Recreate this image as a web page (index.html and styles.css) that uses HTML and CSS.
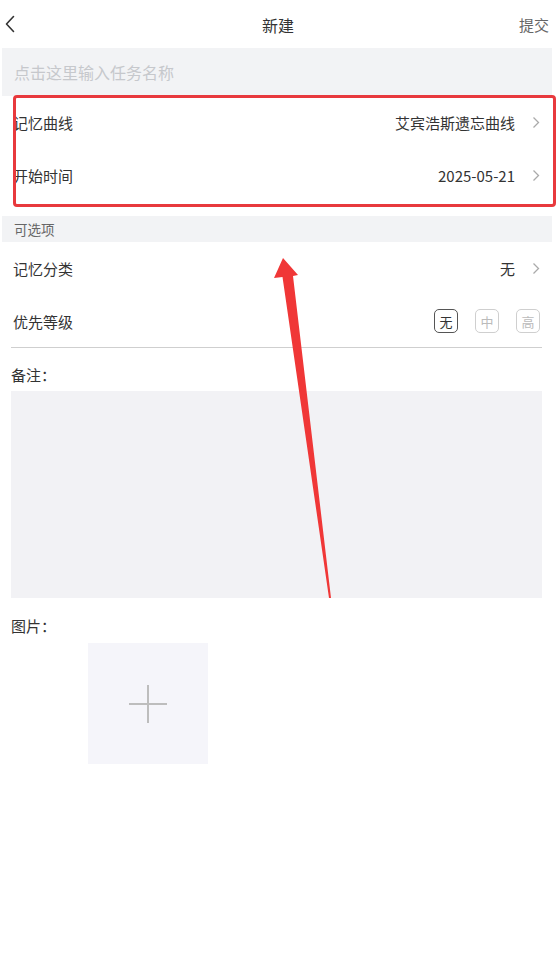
FILE: index.html
```html
<!DOCTYPE html>
<html lang="zh">
<head>
<meta charset="utf-8">
<title>新建</title>
<link rel="stylesheet" href="styles.css">
</head>
<body>
<div class="page">
  <header class="topbar">
    <span class="back">
      <svg width="12" height="18" viewBox="0 0 12 18"><path d="M9.5 1.5 L2.5 9 L9.5 16.5" fill="none" stroke="#333" stroke-width="1.6" stroke-linecap="round" stroke-linejoin="round"/></svg>
    </span>
    <span class="title">新建</span>
    <span class="submit">提交</span>
  </header>

  <div class="name-input">点击这里输入任务名称</div>

  <div class="row first-row">
    <span class="label">记忆曲线</span>
    <span class="value">艾宾浩斯遗忘曲线</span>
    <span class="chev"><svg width="8" height="13" viewBox="0 0 8 13"><path d="M1.5 1.5 L6.5 6.5 L1.5 11.5" fill="none" stroke="#aaa" stroke-width="1.3"/></svg></span>
  </div>
  <div class="row">
    <span class="label">开始时间</span>
    <span class="value">2025-05-21</span>
    <span class="chev"><svg width="8" height="13" viewBox="0 0 8 13"><path d="M1.5 1.5 L6.5 6.5 L1.5 11.5" fill="none" stroke="#aaa" stroke-width="1.3"/></svg></span>
  </div>

  <div class="section">可选项</div>

  <div class="row">
    <span class="label">记忆分类</span>
    <span class="value">无</span>
    <span class="chev"><svg width="8" height="13" viewBox="0 0 8 13"><path d="M1.5 1.5 L6.5 6.5 L1.5 11.5" fill="none" stroke="#aaa" stroke-width="1.3"/></svg></span>
  </div>
  <div class="row priority-row">
    <span class="label">优先等级</span>
    <div class="levels">
      <span class="lvl selected">无</span>
      <span class="lvl">中</span>
      <span class="lvl">高</span>
    </div>
  </div>

  <div class="field-label notes-label">备注：</div>
  <div class="notes"></div>

  <div class="field-label pic-label">图片：</div>
  <div class="pics">
    <div class="add-pic">
      <svg width="40" height="40" viewBox="0 0 40 40"><path d="M20 1 V39 M1 20 H39" stroke="#bdbdbd" stroke-width="2"/></svg>
    </div>
  </div>

  <div class="red-box"></div>
  <svg class="arrow" width="556" height="966" viewBox="0 0 556 966">
    <polygon points="283,258 274,278 282.5,277 329,598 331,598 293,276 298,275" fill="#f03737"/>
  </svg>
</div>
</body>
</html>
```

FILE: styles.css
```css
* { box-sizing: border-box; }
html, body { margin: 0; padding: 0; background: #fff; }
body {
  font-family: "Noto Sans CJK SC", "Noto Sans", sans-serif;
  color: #333;
  width: 556px;
}
.page { position: relative; width: 556px; min-height: 966px; }

.topbar {
  height: 48px;
  display: flex;
  align-items: center;
  justify-content: space-between;
  padding: 0 7px 0 4px;
  position: relative;
}
.back { display: flex; align-items: center; width: 20px; height: 20px; }
.title {
  position: absolute;
  left: 0; right: 0;
  text-align: center;
  font-size: 16px;
  line-height: 48px;
  top: 1px;
  pointer-events: none;
}
.submit { font-size: 15px; color: #666; margin-top: 1px; }

.name-input {
  margin: 0 4px 0 2px;
  height: 48px;
  background: #f2f3f5;
  color: #c6c8cc;
  font-size: 16px;
  display: flex;
  align-items: center;
  padding-left: 12px;
}

.row {
  height: 53px;
  display: flex;
  align-items: center;
  padding: 0 16px 0 13px;
  font-size: 15px;
  background: #fff;
}
.row .label { flex: 1; }
.row .value { color: #333; }
.chev { display: flex; align-items: center; margin-left: 17px; }

.section {
  margin: 14px 4px 0 2px;
  height: 26px;
  background: #f2f3f5;
  color: #666;
  font-size: 13.5px;
  line-height: 26px;
  padding-left: 12px;
}

.priority-row {
  margin: 0 14px 0 11px;
  padding-right: 2px;
  padding-left: 2px;
  border-bottom: 1px solid #cfcfcf;
}
.levels { display: flex; gap: 17px; }
.lvl {
  width: 24px; height: 24px;
  border: 1px solid #cfcfcf;
  border-radius: 5px;
  font-size: 13px;
  color: #bbb;
  display: flex; align-items: center; justify-content: center;
}
.lvl.selected { border-color: #555; color: #333; }

.field-label {
  font-size: 15px;
  padding-left: 11px;
  line-height: 28px;
}
.notes-label { margin-top: 13px; }
.notes {
  margin: 2px 14px 0 11px;
  height: 207px;
  background: #f2f2f5;
}
.pic-label { margin-top: 14px; }
.pics { padding: 3px 0 0 88px; }
.add-pic {
  width: 120px; height: 121px;
  background: #f5f5fa;
  display: flex; align-items: center; justify-content: center;
}

.red-box {
  position: absolute;
  left: 13px; top: 95px;
  width: 543px; height: 112px;
  border: 3.5px solid #e8393d;
  border-radius: 4px;
}
.arrow { position: absolute; left: 0; top: 0; pointer-events: none; }
```
